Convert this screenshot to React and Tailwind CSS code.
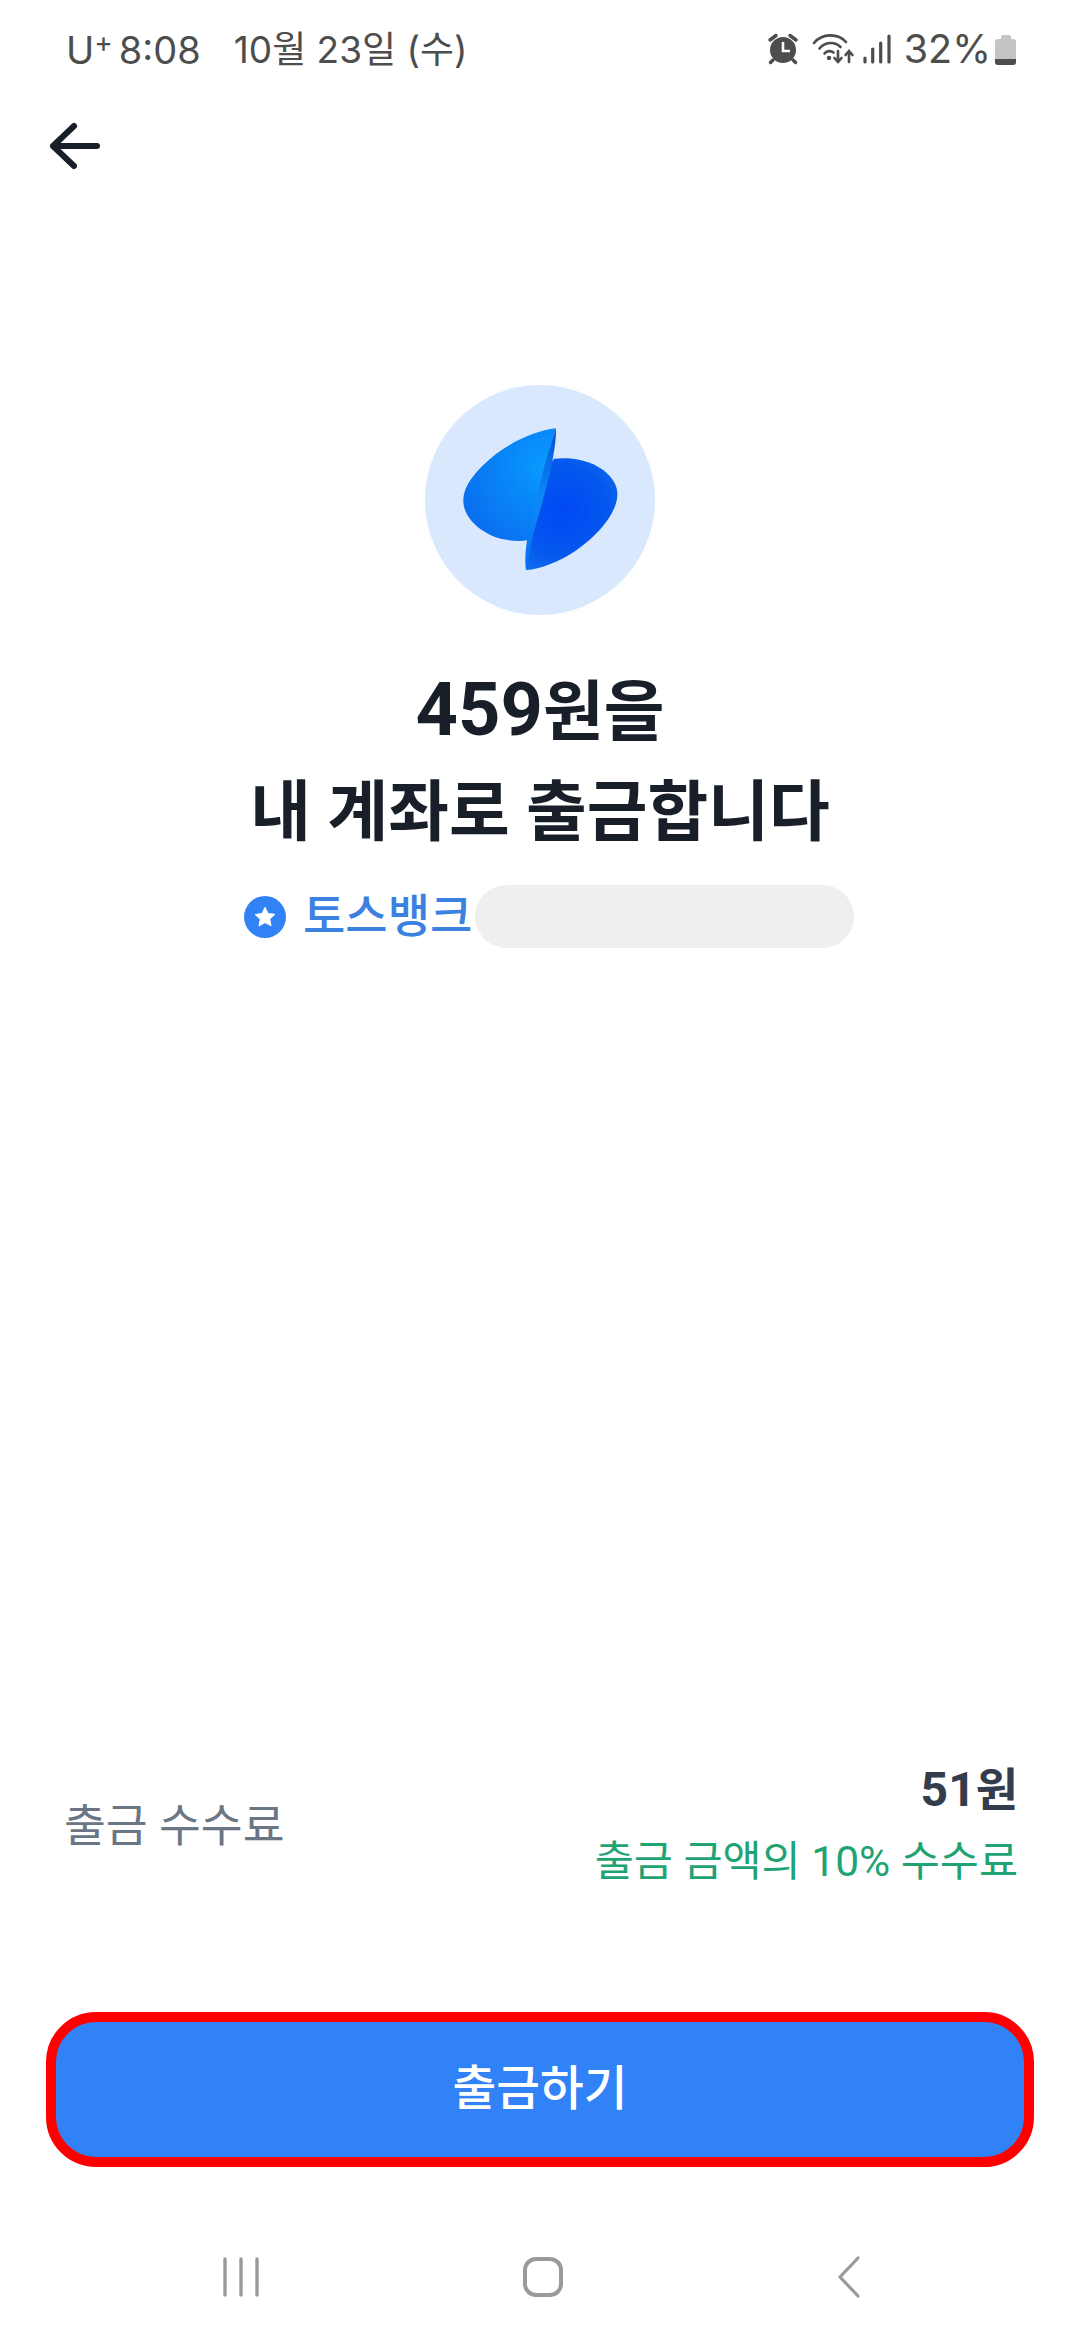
// App.jsx — withdrawal confirm screen
const FONT = "font-['Roboto','Noto_Sans_CJK_KR',sans-serif]";

// ── Status bar icons ───────────────────────────────────────────────────────
function StatusIcons() {
  return (
    <svg width="141" height="40" viewBox="3 0 141 40" fill="none" className="shrink-0">
      {/* alarm */}
      <circle cx="23" cy="20" r="13" fill="#4d4d4d" />
      <g stroke="#4d4d4d" strokeWidth="3.5" strokeLinecap="round">
        <path d="M10 10 16 5.5" />
        <path d="M36 10 30 5.5" />
        <path d="M13 30 10.5 32.5" />
        <path d="M33 30 35.5 32.5" />
      </g>
      <path d="M23 12v9h7" stroke="#fff" strokeWidth="2.6" />
      {/* wifi */}
      <g stroke="#4d4d4d" strokeWidth="2.6" strokeLinecap="round">
        <path d="M54 13C62 3 78 3 86 12" />
        <path d="M59.5 18.5C65 11.5 75 11.5 80.5 17" />
        <path d="M64.5 23.5C67 20.5 71 20.5 73.5 22.5" />
        <path d="M78 21v11M74.5 28l3.5 4 3.5-4" />
        <path d="M89 21v11M85.5 25l3.5-4 3.5 4" />
      </g>
      <circle cx="69" cy="28" r="2.2" fill="#4d4d4d" />
      {/* signal */}
      <g stroke="#4d4d4d" strokeWidth="3.2" strokeLinecap="round">
        <path d="M105 28v4" />
        <path d="M112.7 19v13" />
        <path d="M120.7 13v19" />
        <path d="M129 6v26" />
      </g>
    </svg>
  );
}

function Battery() {
  return (
    <div className="ml-[4px] flex h-[30px] w-[21px] flex-col items-center">
      <div className="h-[4px] w-[10px] rounded-t-[2px] bg-[#c4c4c4]" />
      <div className="flex w-full flex-1 flex-col overflow-hidden rounded-[3px] bg-[#c4c4c4]">
        <div className="flex-1" />
        <div className="h-[6px] bg-[#4d4d4d]" />
      </div>
    </div>
  );
}

function StatusBar() {
  return (
    <div className="flex h-[100px] items-center justify-between pl-[66px] pr-[64px] font-['Inter','Noto_Sans_CJK_KR',sans-serif] text-[38px] text-[#4d4d4d]">
      <div className="flex items-center whitespace-nowrap">
        <span>
          U<span className="relative top-[-12px] text-[28px]">+</span>
        </span>
        <span className="ml-[6px]">8:08</span>
        <span className="ml-[33px] text-[37px]">10월 23일 (수)</span>
      </div>
      <div className="flex items-center">
        <StatusIcons />
        <span className="whitespace-nowrap text-[39.5px]">32%</span>
        <Battery />
      </div>
    </div>
  );
}

// ── Toss style logo ────────────────────────────────────────────────────────
function Logo() {
  return (
    <svg viewBox="75 45 690 690" className="h-[230px] w-[230px]">
      <defs>
        <radialGradient id="right" cx="490" cy="420" r="210" gradientUnits="userSpaceOnUse">
          <stop offset="0" stopColor="#0048f5" />
          <stop offset="0.65" stopColor="#0558ee" />
          <stop offset="1" stopColor="#0f6eea" />
        </radialGradient>
        <radialGradient id="left" cx="440" cy="290" r="290" gradientUnits="userSpaceOnUse">
          <stop offset="0" stopColor="#0a9cff" />
          <stop offset="0.4" stopColor="#0888f8" />
          <stop offset="1" stopColor="#0a6cee" />
        </radialGradient>
        <linearGradient id="edge" x1="465" y1="175" x2="378" y2="600" gradientUnits="userSpaceOnUse">
          <stop offset="0" stopColor="#0550d8" />
          <stop offset="0.5" stopColor="#0a8cf8" />
          <stop offset="1" stopColor="#0a6cf0" />
        </linearGradient>
      </defs>
      <path
        d="M378 600C376 560 382 510 408 400C425 335 445 285 462 266C500 262 560 264 610 300C640 325 654 350 652 378C648 430 600 490 530 540C480 575 420 598 378 600Z"
        fill="url(#right)"
      />
      <path
        d="M468 175C400 182 310 225 250 285C205 330 185 365 191 405C198 450 250 495 310 508C340 514 365 514 385 510C395 430 440 270 468 175Z"
        fill="url(#left)"
      />
      <path d="M468 175C470 240 440 360 400 490C390 540 385 580 378 600C372 560 380 510 392 455C410 370 440 260 468 175Z" fill="url(#edge)" />
    </svg>
  );
}

function Hero() {
  return (
    <div className="flex flex-col items-center pt-[225px]">
      <div className="flex h-[230px] w-[230px] items-center justify-center rounded-full bg-[#d9e8fc]">
        <Logo />
      </div>
      <h1 className="mt-[45px] text-center text-[66px] font-bold leading-[100px] text-[#191f28]">
        <span className="text-[74px]">459</span>원을
        <br />
        내 계좌로 출금합니다
      </h1>
      <div className="mt-[22px] flex h-[63px] w-[692px] items-center pl-[50px]">
        <div className="flex h-[42px] w-[42px] items-center justify-center rounded-full bg-[#3182f6]">
          <svg viewBox="0 0 24 24" className="h-[26px] w-[26px]" fill="#fff">
            <path d="M12 3.2l2.7 5.6 6.1.8-4.5 4.2 1.2 6.1L12 17l-5.5 3 1.2-6.1-4.5-4.2 6.1-.8z" stroke="#fff" strokeWidth="1" strokeLinejoin="round" />
          </svg>
        </div>
        <span className="ml-[17px] whitespace-nowrap text-[46px] font-medium leading-[63px] text-[#3b82e0]">토스뱅크</span>
        <div className="ml-[3px] h-[63px] w-[379px] rounded-full bg-[#efefef]" />
      </div>
    </div>
  );
}

function FeeRow() {
  return (
    <div className="flex items-center justify-between pl-[64px] pr-[62px]">
      <span className="text-[45.5px] text-[#6b7684]">출금 수수료</span>
      <div className="flex flex-col items-end">
        <span className="text-[46px] font-bold leading-[54px] text-[#333d4b]">
          <span className="text-[48px]">51</span>원
        </span>
        <span className="mt-[15px] text-[42.5px] leading-[60px] text-[#1fa373]">출금 금액의 10% 수수료</span>
      </div>
    </div>
  );
}

function NavBar() {
  return (
    <div className="flex h-[173px] items-start pt-[88px]">
      <div className="flex flex-1 items-center justify-between pl-[222px] pr-[219px]">
        <svg width="38" height="42" viewBox="0 0 38 42" fill="none" stroke="#9a9a9a" strokeWidth="3.4" strokeLinecap="round">
          <path d="M3 3v36M19 3v36M35 3v36" />
        </svg>
        <svg width="42" height="42" viewBox="0 0 42 42" fill="none" stroke="#9a9a9a" strokeWidth="4" className="mr-[12px]">
          <rect x="3" y="3" width="36" height="36" rx="11" />
        </svg>
        <svg width="24" height="44" viewBox="0 0 24 44" fill="none" stroke="#9a9a9a" strokeWidth="3.2" strokeLinecap="round" strokeLinejoin="round">
          <path d="M21 3 3 22l18 19" />
        </svg>
      </div>
    </div>
  );
}

export default function App() {
  return (
    <div className={`flex h-[2340px] w-[1080px] flex-col bg-white ${FONT}`}>
      <StatusBar />
      <div className="flex h-[60px] items-start pl-[50px] pt-[23px]">
        <svg width="50" height="46" viewBox="0 0 50 46" fill="none" stroke="#191f28" strokeWidth="6" strokeLinecap="round" strokeLinejoin="round" className="overflow-visible">
          <path d="M3 23h44M24 3 3 23l21 20" />
        </svg>
      </div>
      <Hero />
      <div className="flex-1" />
      <FeeRow />
      <div className="px-[46px] pt-[120px]">
        <button className="flex h-[155px] w-full items-center justify-center rounded-[50px] border-[10px] border-[#ff0000] bg-[#3182f6] text-[47.5px] font-medium text-white">
          출금하기
        </button>
      </div>
      <NavBar />
    </div>
  );
}
